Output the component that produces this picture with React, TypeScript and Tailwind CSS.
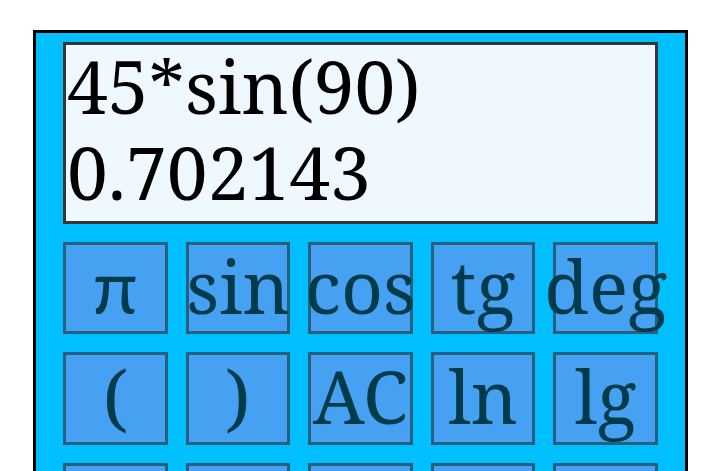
const keys: string[] = ["π", "sin", "cos", "tg", "deg", "(", ")", "AC", "ln", "lg", "", "", "", "", ""];

function Key({ label, index }: { label: string; index: number }) {
  return (
    <button
      type="button"
      aria-label={label || `Key ${index + 1}`}
      className="flex aspect-[17/15] min-w-0 items-center justify-center border-3 border-[#265f7f] bg-[#47a1f3] pb-1 leading-[78px] text-[#003b4c]"
    >
      {label === "π" ? <span className="font-['Lato',sans-serif]">{label}</span> : label}
    </button>
  );
}

export default function App() {
  return (
    <div className="h-screen overflow-hidden bg-white pt-[30px] pr-8 pl-[33px] font-['Noto_Serif','Droid_Serif',serif] text-[73px] leading-[82px]">
      <main className="border-3 border-black bg-[#00bfff] px-[27px] py-[9px]">
        <output className="flex h-[182px] flex-col gap-1 border-3 border-[#363636] bg-[#f0f8ff] px-px text-black">
          <div>45*sin(90)</div>
          <div>0.702143</div>
        </output>
        <div className="mt-[18px] grid grid-cols-5 gap-[18px]">
          {keys.map((label, index) => (
            <Key key={index} label={label} index={index} />
          ))}
        </div>
      </main>
    </div>
  );
}
